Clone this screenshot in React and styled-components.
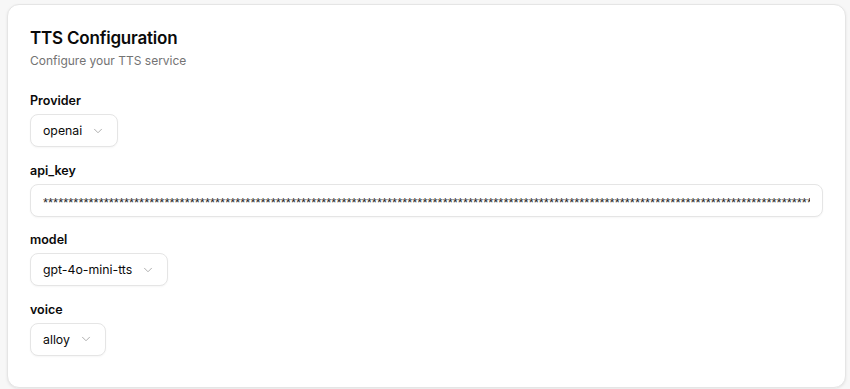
import styled, { createGlobalStyle } from "styled-components";
import { ChevronDown } from "lucide-react";

const GlobalStyle = createGlobalStyle`
  html, body {
    margin: 0;
    padding: 0;
    background: #f7f7f7;
    font-family: Inter, "Noto Sans", sans-serif;
    color: #0a0a0a;
  }
`;

const Page = styled.div`
  padding: 4px 4px 2px 7px;
`;

const Card = styled.section`
  background: #fff;
  border: 1px solid #e5e5e5;
  border-radius: 12px;
  box-shadow: 0 1px 3px rgba(0, 0, 0, 0.08);
  padding: 21px 22px 31px 22px;
  display: flex;
  flex-direction: column;
`;

const Header = styled.div`
  display: flex;
  flex-direction: column;
  gap: 2px;
  margin-bottom: 23px;
`;

const Title = styled.h2`
  margin: 0;
  font-size: 17px;
  line-height: 24px;
  font-weight: 600;
  letter-spacing: -0.2px;
`;

const Subtitle = styled.p`
  margin: 0;
  font-size: 12px;
  line-height: 18px;
  color: #737373;
`;

const Fields = styled.div`
  display: flex;
  flex-direction: column;
  gap: 15.5px;
`;

const Field = styled.div`
  display: flex;
  flex-direction: column;
  gap: 5px;
`;

const Label = styled.label`
  font-size: 12.5px;
  line-height: 16px;
  font-weight: 600;
`;

const SelectBox = styled.button`
  align-self: flex-start;
  display: inline-flex;
  align-items: center;
  gap: 9px;
  height: 33px;
  box-sizing: border-box;
  padding: 0 12px;
  background: #fff;
  border: 1px solid #e5e5e5;
  border-radius: 8px;
  box-shadow: 0 1px 2px rgba(0, 0, 0, 0.04);
  font-family: inherit;
  font-size: 12.3px;
  color: #0a0a0a;
  cursor: pointer;

  svg {
    color: #a3a3a3;
  }
`;

const TextInput = styled.input`
  width: 100%;
  height: 33px;
  box-sizing: border-box;
  padding: 4px 12px 0;
  border: 1px solid #e5e5e5;
  border-radius: 8px;
  box-shadow: 0 1px 2px rgba(0, 0, 0, 0.04);
  font-family: "Liberation Sans", Arial, sans-serif;
  font-size: 13px;
  color: #262626;
  outline: none;
  background: #fff;
`;

const Select = ({ value }) => (
  <SelectBox type="button">
    {value}
    <ChevronDown size={14} strokeWidth={1.5} />
  </SelectBox>
);

const fields = [
  { label: "Provider", type: "select", value: "openai" },
  { label: "api_key", type: "input", value: "*".repeat(220) },
  { label: "model", type: "select", value: "gpt-4o-mini-tts" },
  { label: "voice", type: "select", value: "alloy" },
];

export default function App() {
  return (
    <>
      <GlobalStyle />
      <Page>
        <Card>
          <Header>
            <Title>TTS Configuration</Title>
            <Subtitle>Configure your TTS service</Subtitle>
          </Header>
          <Fields>
            {fields.map((f) => (
              <Field key={f.label}>
                <Label>{f.label}</Label>
                {f.type === "select" ? (
                  <Select value={f.value} />
                ) : (
                  <TextInput readOnly value={f.value} />
                )}
              </Field>
            ))}
          </Fields>
        </Card>
      </Page>
    </>
  );
}
